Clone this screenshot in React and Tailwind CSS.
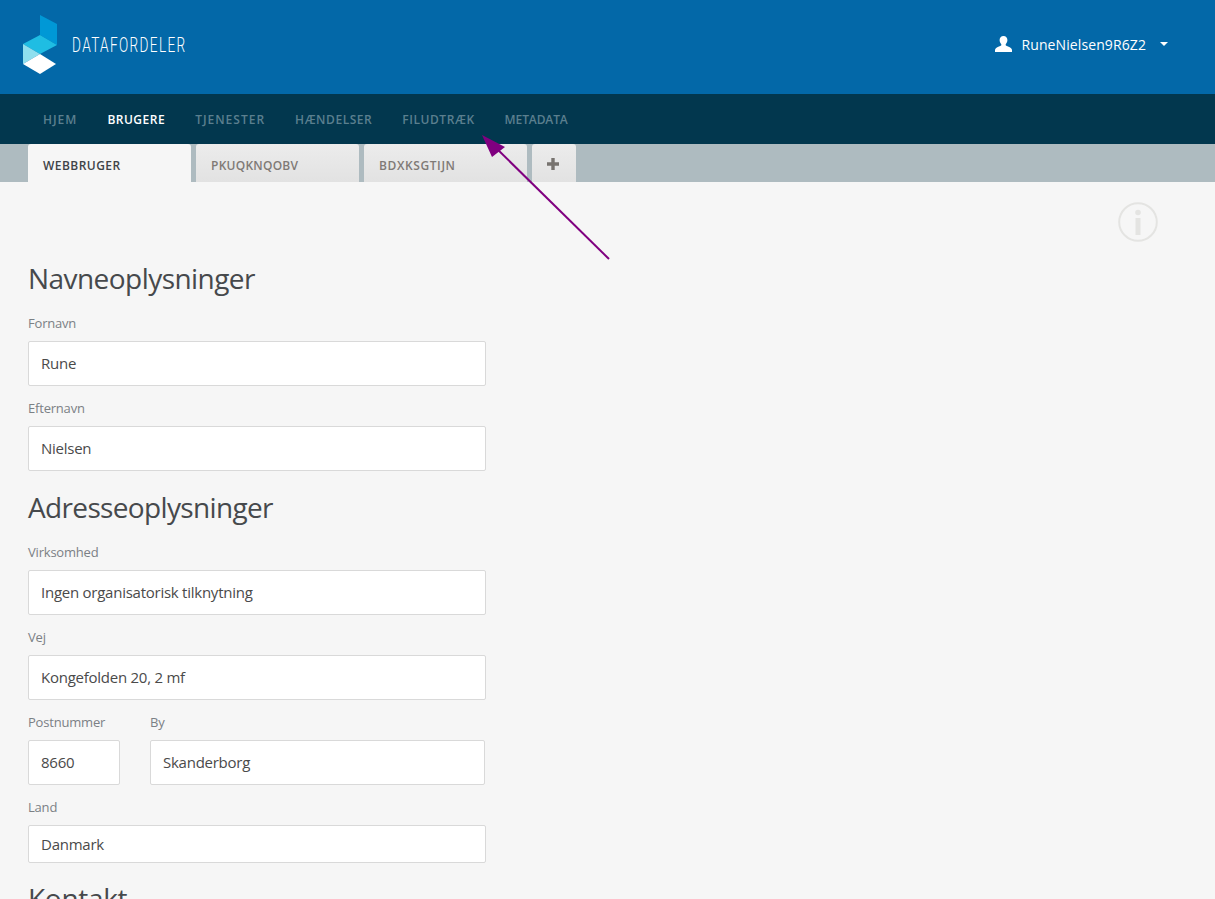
const font = { fontFamily: '"Open Sans", sans-serif' };

function Field({ label, value, className = "w-[458px]", h = "h-[45px]" }) {
  return (
    <div className={className}>
      <label className="block text-[13px] leading-[18px] h-[18px] text-[#7b8085] tracking-[-0.2px]">{label}</label>
      <div className={`mt-[9px] ${h} flex items-center bg-white border border-[#d9d9d9] rounded-[2px] pl-3 text-[15px] text-[#4a4a4a] tracking-[-0.25px]`}>
        {value}
      </div>
    </div>
  );
}

function Tab({ children, active, track }) {
  return (
    <div className={`w-[163px] h-[38px] rounded-t-[3px] flex items-center pt-[6px] pl-[15px] text-[12px] font-semibold ${track} ${active ? "bg-[#f6f6f6] text-[#3f4448]" : "bg-gradient-to-b from-[#ececec] to-[#e2e2e2] text-[#7f7a76]"}`}>
      {children}
    </div>
  );
}

export default function App() {
  const nav = [
    ["HJEM", "text-[#5b7f8e] tracking-[1px]"],
    ["BRUGERE", "text-white tracking-[0.5px]"],
    ["TJENESTER", "text-[#5b7f8e] tracking-[1px]"],
    ["HÆNDELSER", "text-[#5b7f8e] tracking-[0.55px]"],
    ["FILUDTRÆK", "text-[#5b7f8e] tracking-[0.55px]"],
    ["METADATA", "text-[#5b7f8e] tracking-[-0.1px]"],
  ];
  return (
    <div style={font} className="relative h-[899px] overflow-hidden bg-[#f6f6f6]">
      <header className="h-[94px] bg-[#0368a8] flex items-center justify-between pl-[23px] pr-[47px]">
        <div className="flex items-center -mt-[4px]">
          <svg width="34" height="60" viewBox="0 0 34 60">
            <polygon points="17,0 34,9 34,30 17,20" fill="#0098d6" />
            <polygon points="0,29 17,20 34,30 17,39" fill="#1fbde3" />
            <polygon points="0,29 17,39 0,49" fill="#8fdfee" />
            <polygon points="0,49 17,39 33,49 17,59" fill="#ffffff" />
          </svg>
          <span className="ml-[15px] w-[115px] whitespace-nowrap origin-left scale-x-[0.68] text-[20px] font-light text-white tracking-[2px]" style={{ fontFamily: '"Roboto", sans-serif' }}>DATAFORDELER</span>
        </div>
        <div className="flex items-center text-white text-[14px] tracking-[0.1px] -mt-[6px]">
          <svg width="17" height="16" viewBox="0 0 17 16" fill="white" className="-mt-[1px]">
            <path d="M8.5 0C6 0 4.6 1.8 4.6 4c0 1.7.7 3.2 1.700 4.200.2.7 0 1.300-.6 1.600C3.500 11 .6 11.500 0 13.700V16h17v-2.300c-.6-2.200-3.500-2.700-5.700-3.900-.6-.3-.8-.9-.6-1.600 1-1 1.700-2.500 1.700-4.200C12.400 1.800 11 0 8.500 0z" />
          </svg>
          <span className="ml-[9px]">RuneNielsen9R6Z2</span>
          <span className="ml-[14px] w-0 h-0 border-x-[4px] border-x-transparent border-t-[4px] border-t-white" />
        </div>
      </header>

      <nav className="h-[50px] bg-[#02374e] flex items-center pl-[43px] pt-[2px] gap-[30px] text-[12px] font-semibold">
        {nav.map(([t, c]) => (
          <span key={t} className={c}>{t}</span>
        ))}
      </nav>

      <div className="h-[38px] bg-[#aebbc0] flex pl-[28px] gap-[5px]">
        <Tab active track="tracking-[0.45px]">WEBBRUGER</Tab>
        <Tab track="tracking-[0.25px]">PKUQKNQOBV</Tab>
        <Tab track="tracking-[0.6px]">BDXKSGTIJN</Tab>
        <div className="w-[44px] h-[38px] pt-[2px] pr-[2px] rounded-t-[3px] bg-gradient-to-b from-[#ececec] to-[#e2e2e2] flex items-center justify-center">
          <svg width="12" height="12" viewBox="0 0 12 12" fill="#77736f"><path d="M4.300 0h3.400v4.300H12v3.400H7.700V12H4.300V7.700H0V4.300h4.300z" /></svg>
        </div>
      </div>

      <main className="relative pl-[28px]">
        <svg width="40" height="40" viewBox="0 0 40 40" className="absolute left-[1118px] top-[20px]">
          <circle cx="20" cy="20" r="18.800" fill="none" stroke="#e4e4e2" strokeWidth="2" />
          <circle cx="20" cy="10.500" r="2.800" fill="#e4e4e2" />
          <rect x="17.500" y="16" width="5" height="17" fill="#e4e4e2" />
        </svg>

        <h2 className="pt-[78px] text-[28px] leading-[36px] h-[114px] text-[#46494c] tracking-[-0.55px]">Navneoplysninger</h2>
        <div className="mt-[18px] flex flex-col gap-[13px]">
          <Field label="Fornavn" value="Rune" />
          <Field label="Efternavn" value="Nielsen" />
        </div>
        <h2 className="mt-[18px] text-[28px] leading-[36px] text-[#46494c] tracking-[-0.65px]">Adresseoplysninger</h2>
        <div className="mt-[18px] flex flex-col gap-[13px]">
          <Field label="Virksomhed" value="Ingen organisatorisk tilknytning" />
          <Field label="Vej" value="Kongefolden 20, 2 mf" />
          <div className="flex gap-[30px]">
            <Field label="Postnummer" value="8660" className="w-[92px]" />
            <Field label="By" value="Skanderborg" className="w-[335px]" />
          </div>
          <Field label="Land" value="Danmark" h="h-[38px]" />
        </div>
        <h2 className="mt-[17px] text-[28px] leading-[36px] text-[#46494c] tracking-[-0.3px]">Kontakt</h2>
      </main>

      <svg width="1215" height="899" className="absolute inset-0 pointer-events-none">
        <line x1="609" y1="259" x2="492" y2="144" stroke="#800080" strokeWidth="2" />
        <polygon points="482,135 505,147 492,157" fill="#800080" />
      </svg>
    </div>
  );
}
